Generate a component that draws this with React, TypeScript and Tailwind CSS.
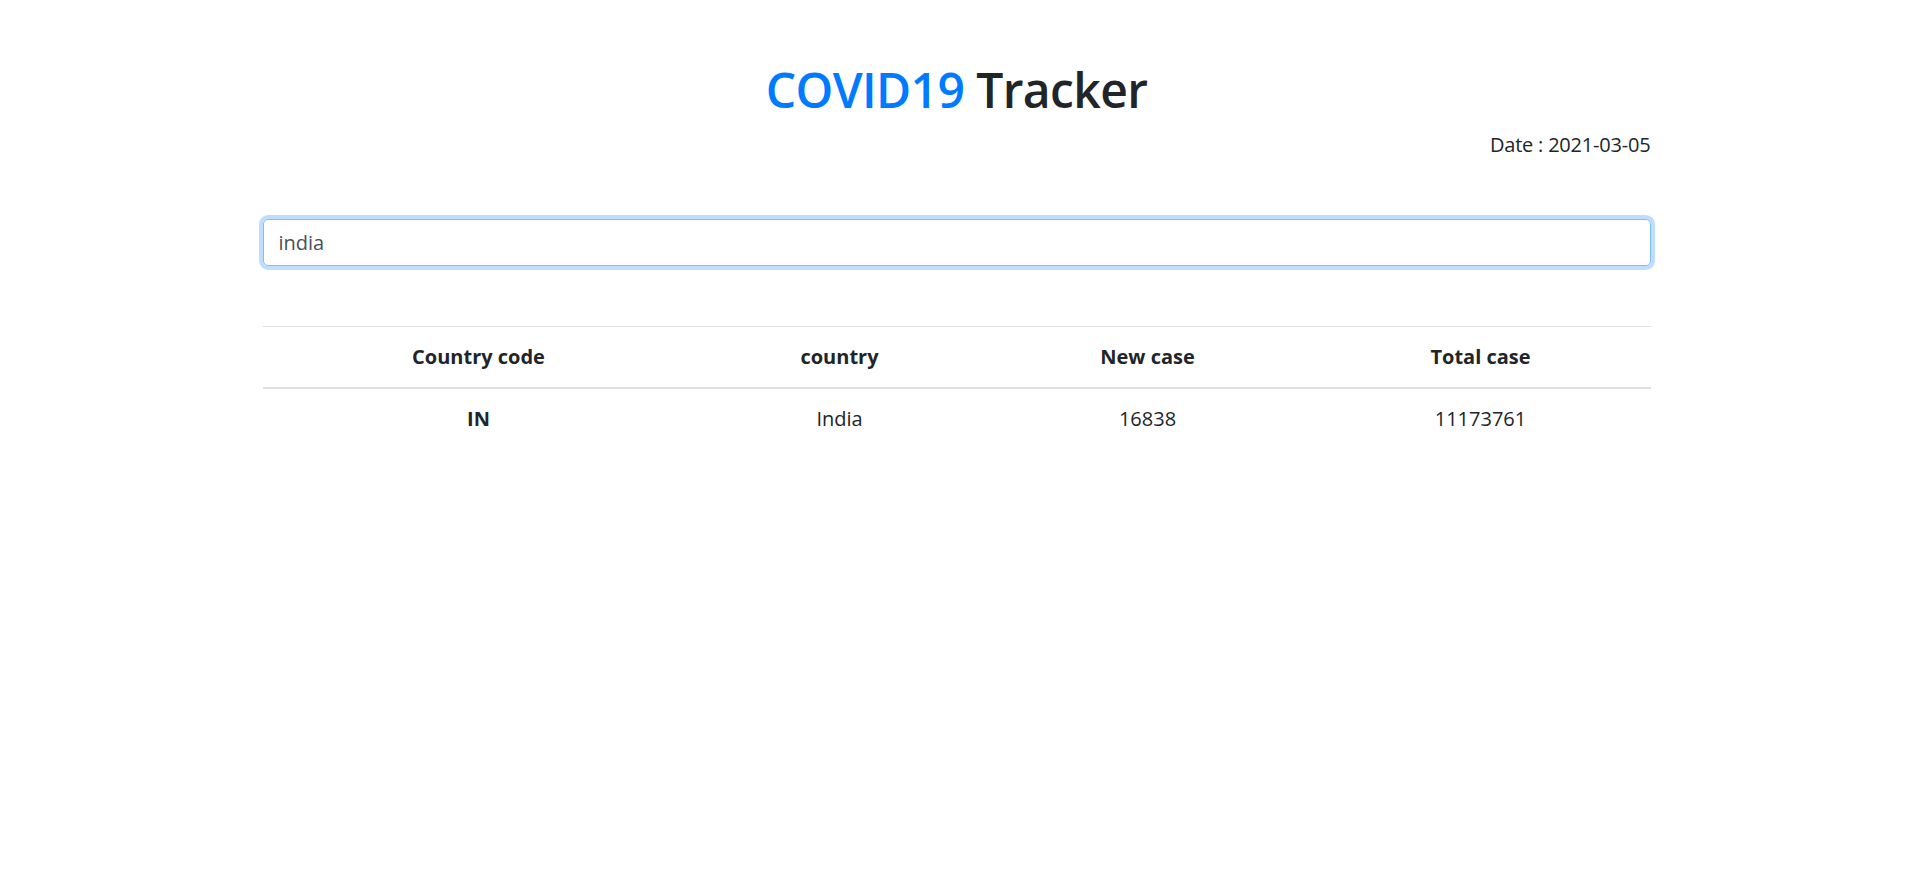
import React from "react";

type Row = {
  code: string;
  country: string;
  newCase: number;
  totalCase: number;
};

const rows: Row[] = [
  { code: "IN", country: "India", newCase: 16838, totalCase: 11173761 },
];

const App = () => {
  return (
    <div
      className="min-h-screen bg-white pr-[4px] text-[#212529] text-[20px] leading-[30px]"
      style={{ fontFamily: '"Open Sans", "Noto Sans", sans-serif' }}
    >
      <div className="mx-auto w-[1388px]">
        <h1 className="pt-[60px] text-center text-[48px] leading-[60px] font-semibold tracking-[-0.6px]">
          <span className="text-[#007bff]">COVID19</span> Tracker
        </h1>
        <p className="mt-[10px] text-right tracking-[-0.2px]">Date : 2021-03-05</p>

        <input
          type="text"
          defaultValue="india"
          className="mt-[59px] block h-[47px] w-full rounded-[5px] border border-[#80bdff] px-[15px] text-[20px] text-[#495057] outline-none shadow-[0_0_0_4px_rgba(0,123,255,0.25)]"
        />

        <table className="mt-[60px] w-full border-collapse text-center">
          <thead>
            <tr className="border-t border-[#dee2e6]">
              <th className="w-[432px] border-b-[2.5px] border-[#dee2e6] py-[15px] font-bold">
                Country code
              </th>
              <th className="w-[290px] border-b-[2.5px] border-[#dee2e6] py-[15px] font-bold">
                country
              </th>
              <th className="w-[326px] border-b-[2.5px] border-[#dee2e6] py-[15px] font-bold">
                New case
              </th>
              <th className="border-b-[2.5px] border-[#dee2e6] py-[15px] font-bold">
                Total case
              </th>
            </tr>
          </thead>
          <tbody>
            {rows.map((row) => (
              <tr key={row.code}>
                <th className="py-[15px] font-bold">{row.code}</th>
                <td className="py-[15px]">{row.country}</td>
                <td className="py-[15px]">{row.newCase}</td>
                <td className="py-[15px]">{row.totalCase}</td>
              </tr>
            ))}
          </tbody>
        </table>
      </div>
    </div>
  );
};

export default App;
